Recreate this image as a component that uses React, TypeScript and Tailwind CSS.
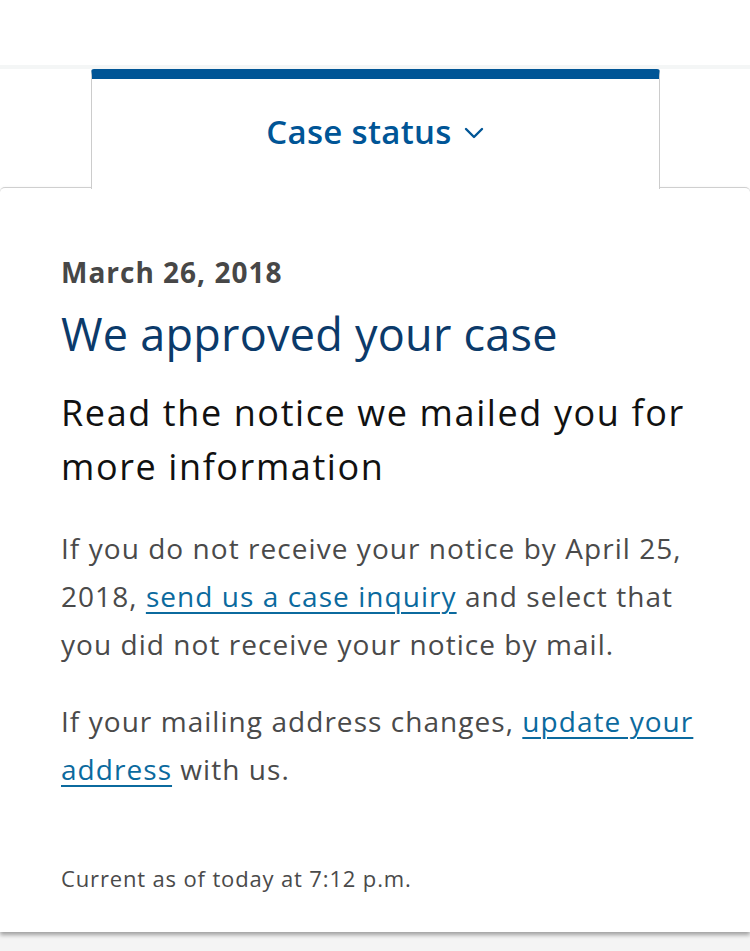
import React from "react";

export default function App() {
  const font = { fontFamily: "'Open Sans', Lato, sans-serif" };
  return (
    <div className="w-[750px] h-[951px] bg-[#f4f4f4] overflow-hidden" style={font}>
      <div className="h-[65px] bg-white" />
      <div className="h-[4px] bg-[#f4f6f6]" />
      <div className="bg-white">
        <div className="flex justify-center">
          <div className="relative z-10 -mb-[2px] w-[569px] h-[120px] bg-white border-x border-[#cccccc] border-t-[10px] border-t-[#005596] rounded-t-[3px] flex items-center justify-center gap-[12px] pb-[4px]">
            <span className="text-[33px] font-semibold tracking-[0.3px] text-[#005596]">Case status</span>
            <svg width="20" height="12" viewBox="0 0 20 12" className="mt-[2px]">
              <polyline points="2,2 10,10 18,2" fill="none" stroke="#005596" strokeWidth="2.4" strokeLinecap="round" strokeLinejoin="round" />
            </svg>
          </div>
        </div>
        <div className="relative border-t border-[#cfcfcf] rounded-t-[5px] bg-white shadow-[0_3px_4px_rgba(0,0,0,0.35)] h-[745px] pl-[61px] pr-[40px] pt-[66px]">
          <div className="text-[28px] leading-[36px] font-bold tracking-[1px] text-[#474747]">March 26, 2018</div>
          <div className="mt-[16px] text-[45px] leading-[56px] tracking-[0.25px] text-[#0b3a6a]">We approved your case</div>
          <div className="mt-[24px] text-[36px] leading-[54px] tracking-[1.6px] text-[#111111]">
            Read the notice we mailed you for more information
          </div>
          <p className="mt-[30px] text-[28px] leading-[48px] tracking-[1.05px] text-[#4a4a4a]">
            If you do not receive your notice by April 25, 2018,{" "}
            <a href="#" className="text-[#0b6a9e] underline underline-offset-[5px] decoration-[1.5px]">send us a case inquiry</a>{" "}
            and select that you did not receive your notice by mail.
          </p>
          <p className="mt-[29px] text-[28px] leading-[48px] tracking-[1.05px] text-[#4a4a4a]">
            If your mailing address changes,{" "}
            <a href="#" className="text-[#0b6a9e] underline underline-offset-[5px] decoration-[1.5px]">update your address</a>{" "}
            with us.
          </p>
          <div className="mt-[70px] text-[22px] leading-[30px] tracking-[0.85px] text-[#4a4a4a]">Current as of today at 7:12 p.m.</div>
        </div>
      </div>
    </div>
  );
}
